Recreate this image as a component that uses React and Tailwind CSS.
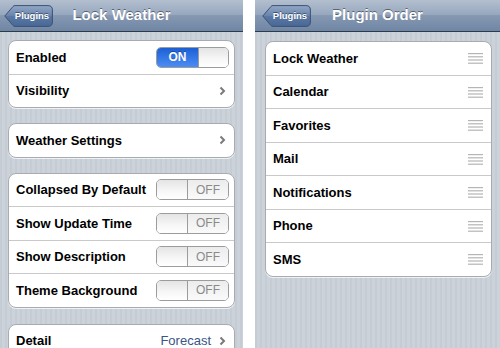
import React from 'react';

const stripes =
  'bg-[repeating-linear-gradient(90deg,#c5ccd4_0px,#c5ccd4_2px,#cbd2d9_2px,#cbd2d9_5px)]';

const BackButton = () => (
  <div className="relative h-[22px] w-[49px]">
    <svg className="absolute inset-0" width="49" height="22" viewBox="0 0 49 22">
      <defs>
        <linearGradient id="bb" x1="0" y1="0" x2="0" y2="1">
          <stop offset="0" stopColor="#93a8c6" />
          <stop offset="0.5" stopColor="#6783ab" />
          <stop offset="0.5" stopColor="#5a78a3" />
          <stop offset="1" stopColor="#4a6896" />
        </linearGradient>
      </defs>
      <path
        d="M0.8 11 L9 1.5 Q9.8 0.6 11 0.6 H44 Q48.4 0.6 48.4 5 V17 Q48.4 21.4 44 21.4 H11 Q9.8 21.4 9 20.5 Z"
        fill="url(#bb)"
        stroke="#3b5274"
        strokeWidth="1"
      />
    </svg>
    <span className="absolute inset-y-0 left-[10px] right-[3px] flex items-center justify-center text-[9.5px] font-bold text-white [text-shadow:0_-1px_0_rgba(0,0,0,0.45)]">
      Plugins
    </span>
  </div>
);

const NavBar = ({ title, backClass }) => (
  <div className="relative flex h-[32px] shrink-0 items-center border-b border-[#2f3a4a] bg-[linear-gradient(180deg,#b3bfcf_0%,#95a6bd_50%,#8698b2_50%,#6f86a4_100%)]">
    <div className={`absolute top-[5px] ${backClass}`}>
      <BackButton />
    </div>
    <div className="flex-1 text-center text-[15px] font-bold text-white [text-shadow:0_-1px_0_rgba(0,0,0,0.45)]">
      {title}
    </div>
  </div>
);

const Chevron = () => (
  <svg width="7" height="10" viewBox="0 0 7 10">
    <path d="M1.5 1.5 L5 5 L1.5 8.5" fill="none" stroke="#7a7a7a" strokeWidth="2" />
  </svg>
);

const Grip = () => (
  <svg width="15" height="12" viewBox="0 0 15 12">
    <rect x="0" y="1" width="15" height="1.2" fill="#b5b5b5" />
    <rect x="0" y="4.2" width="15" height="1.2" fill="#b5b5b5" />
    <rect x="0" y="7.4" width="15" height="1.2" fill="#b5b5b5" />
    <rect x="0" y="10.6" width="15" height="1.2" fill="#b5b5b5" />
  </svg>
);

const Toggle = ({ on }) => (
  <div className="flex h-[21px] w-[73px] overflow-hidden rounded-[5px] border border-[#9c9c9c]">
    {on ? (
      <>
        <div className="flex w-[41px] items-center justify-center bg-[linear-gradient(180deg,#1d5fd4_0%,#3377e6_50%,#4d8cf3_100%)] text-[12px] font-bold text-white [text-shadow:0_-1px_0_rgba(0,0,0,0.3)]">
          ON
        </div>
        <div className="flex-1 border-l border-[#9c9c9c] bg-[linear-gradient(180deg,#e4e4e4_0%,#f7f7f7_60%,#ffffff_100%)]" />
      </>
    ) : (
      <>
        <div className="w-[31px] border-r border-[#9c9c9c] bg-[linear-gradient(180deg,#e4e4e4_0%,#f7f7f7_60%,#ffffff_100%)]" />
        <div className="flex flex-1 items-center justify-center bg-[linear-gradient(180deg,#ececec_0%,#fafafa_100%)] text-[12px] text-[#8a8a8a]">
          OFF
        </div>
      </>
    )}
  </div>
);

const Group = ({ children, className = '' }) => (
  <div
    className={`shrink-0 overflow-hidden rounded-[8px] border border-[#a8abaf] bg-white shadow-[0_1px_0_rgba(255,255,255,0.7)] ${className}`}
  >
    {children}
  </div>
);

const Row = ({ label, first, children, pr = 'pr-[8px]', pl = 'pl-[7px]' }) => (
  <div
    className={`flex h-[32.5px] items-center justify-between ${pl} ${pr} ${first ? '' : 'border-t border-[#c9c9c9]'} box-content`}
  >
    <span className="text-[13px] font-bold text-black">{label}</span>
    {children}
  </div>
);

const settings = [
  'Collapsed By Default',
  'Show Update Time',
  'Show Description',
  'Theme Background',
];

const plugins = ['Lock Weather', 'Calendar', 'Favorites', 'Mail', 'Notifications', 'Phone', 'SMS'];

export default function App() {
  return (
    <div className="flex h-[348px] w-[500px] overflow-hidden bg-white font-['Liberation_Sans',Arial,sans-serif]">
      {/* left screen */}
      <div className={`flex h-full w-[243px] flex-col overflow-hidden ${stripes}`}>
        <NavBar title="Lock Weather" backClass="left-[4px]" />
        <div className="shrink-0 px-[8px] pt-[8px]">
          <Group>
            <Row label="Enabled" first pr="pr-[5px]">
              <Toggle on />
            </Row>
            <Row label="Visibility">
              <Chevron />
            </Row>
          </Group>
          <Group className="mt-[15px]">
            <Row label="Weather Settings" first>
              <Chevron />
            </Row>
          </Group>
          <Group className="mt-[15px]">
            {settings.map((s, i) => (
              <Row key={s} label={s} first={i === 0} pr="pr-[5px]">
                <Toggle />
              </Row>
            ))}
          </Group>
          <Group className="mt-[16px]">
            <Row label="Detail" first>
              <div className="flex items-center gap-[8px]">
                <span className="text-[13px] text-[#3a5587]">Forecast</span>
                <Chevron />
              </div>
            </Row>
          </Group>
        </div>
      </div>

      <div className="w-[12px]" />

      {/* right screen */}
      <div className={`flex h-full flex-1 flex-col overflow-hidden ${stripes}`}>
        <NavBar title="Plugin Order" backClass="left-[7px]" />
        <div className="shrink-0 pl-[10px] pr-[8px] pt-[9px]">
          <Group>
            {plugins.map((p, i) => (
              <Row key={p} label={p} first={i === 0}>
                <Grip />
              </Row>
            ))}
          </Group>
        </div>
      </div>
    </div>
  );
}
